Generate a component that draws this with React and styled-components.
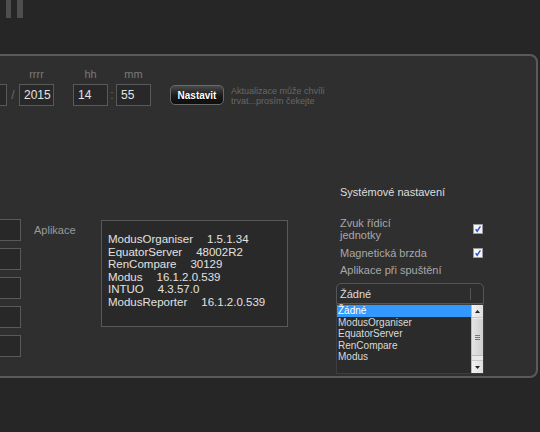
import React from 'react';
import styled, { createGlobalStyle } from 'styled-components';

const GlobalStyle = createGlobalStyle`
  html, body {
    margin: 0;
    padding: 0;
    background: #262626;
    overflow: hidden;
  }
  body {
    font-family: 'Liberation Sans', Arial, sans-serif;
  }
`;

const Page = styled.div`
  width: 540px;
  height: 432px;
  overflow: hidden;
  background: #262626;
`;

const Header = styled.div`
  height: 54px;
  padding-left: 6px;
`;

const Panel = styled.div`
  box-sizing: border-box;
  margin-left: -150px;
  width: 688px;
  height: 324px;
  border: 2px solid #5a5a5a;
  border-radius: 8px;
  background: #2f2f2f;
`;

const DateRow = styled.div`
  display: flex;
  align-items: flex-end;
  padding: 12px 0 0 73px;
`;

const Field = styled.div`
  display: flex;
  flex-direction: column;
  align-items: center;
  gap: 4px;
`;

const FieldLabel = styled.span`
  height: 12px;
  font-size: 11px;
  line-height: 12px;
  color: #7a7a7a;
`;

const TextBox = styled.div`
  box-sizing: border-box;
  width: ${({ $w }) => $w || 35}px;
  height: 22px;
  border: 1px solid #595959;
  background: #282828;
  color: #e4e4e4;
  font-size: 12px;
  line-height: 20px;
  padding-left: 4px;
`;

const Sep = styled.span`
  width: ${({ $w }) => $w}px;
  height: 22px;
  line-height: 22px;
  text-align: center;
  font-size: 12px;
  color: #6a6a6a;
`;

const Spacer = styled.div`
  width: ${({ $w }) => $w}px;
`;

const SetButton = styled.button`
  box-sizing: border-box;
  width: 54px;
  height: 20px;
  margin-bottom: 1px;
  padding: 0;
  border: 1px solid #6a6a6a;
  border-radius: 5px;
  background: linear-gradient(#4a4a4a, #1a1a1a 55%, #0e0e0e);
  color: #fff;
  font-family: 'Liberation Sans', Arial, sans-serif;
  font-size: 10px;
  font-weight: bold;
  text-shadow: 0 1px 1px #000;
`;

const Hint = styled.div`
  margin-left: 7px;
  font-size: 9px;
  line-height: 10px;
  color: #686868;
`;

const Lower = styled.div`
  display: flex;
  align-items: flex-start;
  margin-top: 79px;
  padding-left: 109px;
`;

const InputStack = styled.div`
  display: flex;
  flex-direction: column;
  gap: 7px;
  margin-top: 34px;
`;

const AppsLabel = styled.div`
  width: 67px;
  margin: 34px 0 0 13px;
  font-size: 11px;
  line-height: 22px;
  color: #9a9a9a;
`;

const InfoBox = styled.div`
  box-sizing: border-box;
  width: 187px;
  height: 107px;
  margin-top: 35px;
  padding: 12px 0 0 6px;
  border: 1px solid #595959;
  background: #292929;
  color: #e2e2e2;
  font-size: 11.5px;
  line-height: 12.6px;
`;

const InfoLine = styled.div`
  display: flex;
  gap: 14px;
  white-space: nowrap;
`;

const Settings = styled.div`
  width: 148px;
  margin-left: 48px;
  display: flex;
  flex-direction: column;
`;

const Title = styled.div`
  padding-left: 4px;
  font-size: 11px;
  line-height: 14px;
  color: #dedede;
`;

const OptionRow = styled.div`
  display: flex;
  align-items: center;
  justify-content: space-between;
  padding: 0 1px 0 4px;
  margin-top: ${({ $top }) => $top}px;
  font-size: 11px;
  line-height: 12px;
  color: #a8a8a8;
`;

const SelectBox = styled.div`
  box-sizing: border-box;
  display: flex;
  align-items: center;
  justify-content: space-between;
  height: 21px;
  margin-top: 7px;
  padding: 0 12px 0 3px;
  border: 1px solid #555;
  border-radius: 5px 5px 0 0;
  background: #2d2d2d;
  color: #dcdcdc;
  font-size: 11px;
`;

const SelectDivider = styled.span`
  width: 1px;
  height: 12px;
  background: #555;
`;

const ListBox = styled.div`
  box-sizing: border-box;
  display: flex;
  height: 70px;
  border: 1px solid #3e3e3e;
  background: #2b2b2b;
`;

const ListItems = styled.div`
  flex: 1;
`;

const ListItem = styled.div`
  height: 11.5px;
  line-height: 11.5px;
  padding-left: 1px;
  font-size: 10px;
  color: ${({ $active }) => ($active ? '#fff' : '#dadada')};
  background: ${({ $active }) => ($active ? '#3399ff' : 'transparent')};
`;

const ScrollBar = styled.div`
  width: 12px;
  display: flex;
  flex-direction: column;
  background: #e9e9e9;
  border-left: 1px solid #bbb;
  box-sizing: border-box;
`;

const ScrollArrow = styled.div`
  height: 12px;
  display: flex;
  align-items: center;
  justify-content: center;
  background: linear-gradient(90deg, #f2f2f2, #dedede);
  border-bottom: ${({ $down }) => ($down ? 'none' : '1px solid #c8c8c8')};
  border-top: ${({ $down }) => ($down ? '1px solid #c8c8c8' : 'none')};
`;

const ScrollTrack = styled.div`
  flex: 1;
  display: flex;
  flex-direction: column;
  padding: 1px 0;
`;

const Thumb = styled.div`
  height: 36px;
  display: flex;
  flex-direction: column;
  align-items: center;
  justify-content: center;
  gap: 1px;
  background: linear-gradient(90deg, #e4e4e4, #cfcfcf);
  border-bottom: 1px solid #bdbdbd;
`;

const Grip = styled.span`
  width: 5px;
  height: 1px;
  background: #777;
`;

const Logo = () => (
  <svg width="20" height="18" viewBox="0 0 20 18">
    <rect x="0" y="0" width="5" height="18" fill="#4e4e4e" />
    <rect x="11" y="0" width="6" height="18" fill="#4e4e4e" />
  </svg>
);

const Check = () => (
  <svg width="10" height="10" viewBox="0 0 10 10">
    <rect x="0.5" y="0.5" width="9" height="9" fill="#f5f5f5" stroke="#9a9a9a" />
    <path d="M2.6 5.2 L4.2 7.2 L7.4 2.4" fill="none" stroke="#2a4fc4" strokeWidth="1.4" />
  </svg>
);

const Arrow = ({ down }) => (
  <svg width="5" height="3" viewBox="0 0 5 3">
    <path d={down ? 'M0 0 H5 L2.5 3 Z' : 'M0 3 H5 L2.5 0 Z'} fill="#222" />
  </svg>
);

const versions = [
  ['ModusOrganiser', '1.5.1.34'],
  ['EquatorServer', '48002R2'],
  ['RenCompare', '30129'],
  ['Modus', '16.1.2.0.539'],
  ['INTUO', '4.3.57.0'],
  ['ModusReporter', '16.1.2.0.539'],
];

const startApps = ['Žádné', 'ModusOrganiser', 'EquatorServer', 'RenCompare', 'Modus'];

const App = () => {
  return (
    <Page>
      <GlobalStyle />
      <Header>
        <Logo />
      </Header>
      <Panel>
        <DateRow>
          {/* day and month fields sit left of the visible area */}
          <Field>
            <FieldLabel />
            <TextBox />
          </Field>
          <Sep $w={12} />
          <Field>
            <FieldLabel />
            <TextBox />
          </Field>
          <Sep $w={12}>/</Sep>
          <Field>
            <FieldLabel>rrrr</FieldLabel>
            <TextBox>2015</TextBox>
          </Field>
          <Spacer $w={19} />
          <Field>
            <FieldLabel>hh</FieldLabel>
            <TextBox>14</TextBox>
          </Field>
          <Sep $w={8}>:</Sep>
          <Field>
            <FieldLabel>mm</FieldLabel>
            <TextBox>55</TextBox>
          </Field>
          <Spacer $w={19} />
          <SetButton>Nastavit</SetButton>
          <Hint>
            Aktualizace může chvíli
            <br />
            trvat...prosím čekejte
          </Hint>
        </DateRow>
        <Lower>
          <InputStack>
            {[0, 1, 2, 3, 4].map((i) => (
              <TextBox key={i} $w={60} />
            ))}
          </InputStack>
          <AppsLabel>Aplikace</AppsLabel>
          <InfoBox>
            {versions.map(([name, ver]) => (
              <InfoLine key={name}>
                <span>{name}</span>
                <span>{ver}</span>
              </InfoLine>
            ))}
          </InfoBox>
          <Settings>
            <Title>Systémové nastavení</Title>
            <OptionRow $top={18}>
              <span>
                Zvuk řídicí
                <br />
                jednotky
              </span>
              <Check />
            </OptionRow>
            <OptionRow $top={6}>
              <span>Magnetická brzda</span>
              <Check />
            </OptionRow>
            <OptionRow $top={5}>
              <span>Aplikace při spuštění</span>
            </OptionRow>
            <SelectBox>
              <span>Žádné</span>
              <SelectDivider />
            </SelectBox>
            <ListBox>
              <ListItems>
                {startApps.map((a, i) => (
                  <ListItem key={a} $active={i === 0}>
                    {a}
                  </ListItem>
                ))}
              </ListItems>
              <ScrollBar>
                <ScrollArrow>
                  <Arrow />
                </ScrollArrow>
                <ScrollTrack>
                  <Thumb>
                    <Grip />
                    <Grip />
                    <Grip />
                  </Thumb>
                </ScrollTrack>
                <ScrollArrow $down>
                  <Arrow down />
                </ScrollArrow>
              </ScrollBar>
            </ListBox>
          </Settings>
        </Lower>
      </Panel>
    </Page>
  );
};

export default App;
